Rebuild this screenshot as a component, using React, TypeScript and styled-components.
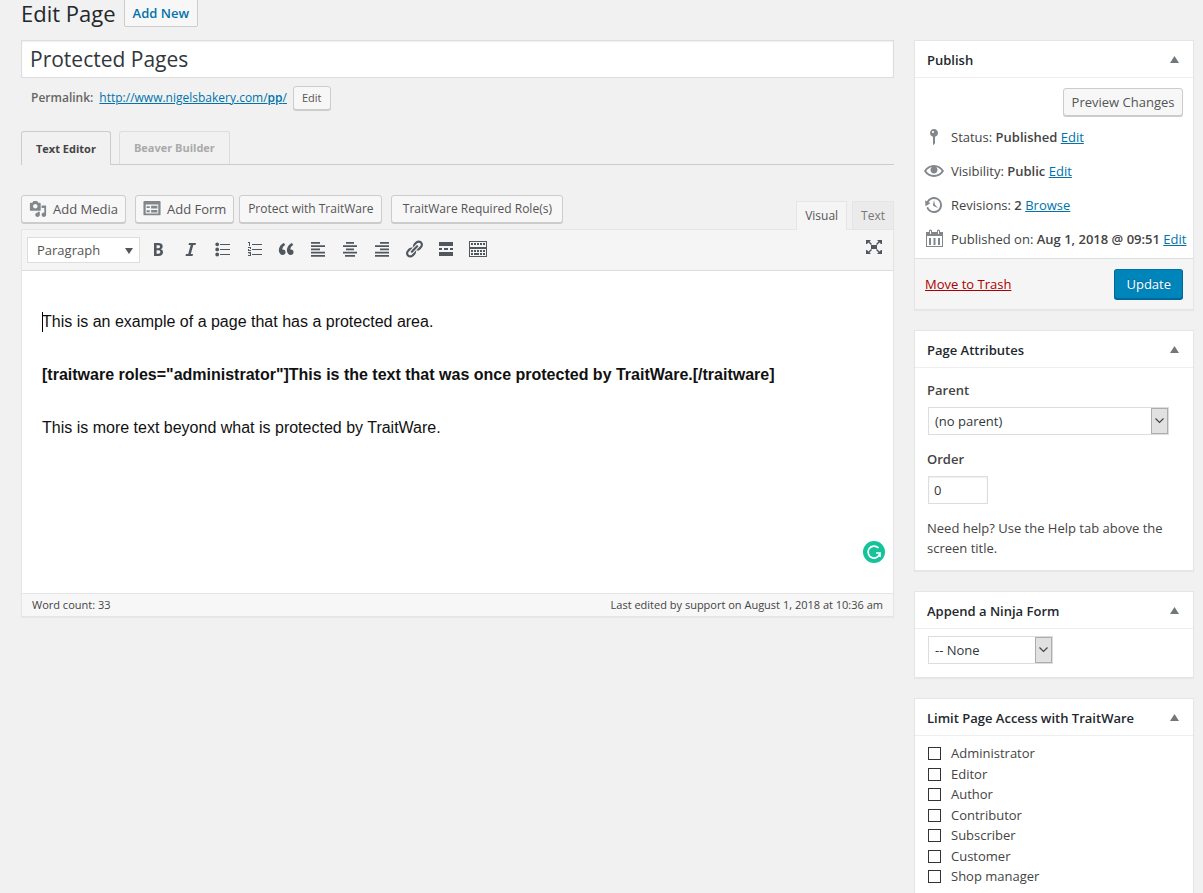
import React, { useState } from "react";
import styled, { createGlobalStyle, css } from "styled-components";

const GlobalStyle = createGlobalStyle`
  * { box-sizing: border-box; }
  body {
    margin: 0;
    background: #f1f1f1;
    color: #444;
    font: 13px/20px "Segoe UI", "Open Sans", "Noto Sans", sans-serif;
  }
  button, input, select, textarea { font: inherit; color: inherit; margin: 0; }
  h1, h2, p { margin: 0; }
`;

const Page = styled.div`
  display: flex;
  flex-direction: column;
  min-height: 100vh;
  padding: 0 9px 0 21px;
`;

const Header = styled.header`
  display: flex;
  align-items: flex-end;
  height: 27px;
  margin-bottom: 13px;
`;

const Heading = styled.h1`
  margin: 0 8px 1px 0;
  font-size: 22px;
  line-height: 26px;
  font-weight: 400;
  color: #23282d;
`;

const AddNew = styled.a`
  flex: none;
  padding: 4px 8px 3px;
  border: 1px solid #ccc;
  border-radius: 2px;
  background: #f7f7f7;
  color: #0073aa;
  font-weight: 600;
  text-decoration: none;
`;

const Columns = styled.div`
  flex: 1;
  display: grid;
  grid-template-columns: minmax(0, 1fr) 280px;
  gap: 20px;
`;

const Main = styled.main`
  min-width: 0;
`;

const Sidebar = styled.aside`
  display: flex;
  flex-direction: column;
  gap: 20px;
`;

const TitleInput = styled.input`
  display: block;
  width: 100%;
  height: 38px;
  padding: 0 8px;
  border: 1px solid #ddd;
  background: #fff;
  color: #32373c;
  font-size: 21px;
  box-shadow: inset 0 1px 2px rgba(0, 0, 0, 0.07);
  outline: none;
`;

const Permalink = styled.div`
  display: flex;
  align-items: center;
  gap: 6px;
  padding: 8px 10px 0;
  color: #666;
  font-size: 12px;

  strong { font-weight: 600; }
`;

const Link = styled.a<{ $danger?: boolean }>`
  color: ${(p) => (p.$danger ? "#a00" : "#0073aa")};
`;

const Button = styled.button<{ $size?: "small" | "primary"; $width?: number; $compact?: boolean }>`
  display: inline-flex;
  align-items: center;
  justify-content: center;
  flex: none;
  height: 28px;
  min-width: ${(p) => p.$width ?? 0}px;
  padding: 0 7px;
  border: 1px solid #ccc;
  border-radius: 3px;
  background: #f7f7f7;
  box-shadow: 0 1px 0 #ccc;
  color: #555;
  font-size: ${(p) => (p.$compact ? 12 : 13)}px;
  white-space: nowrap;
  ${(p) => p.$size === "small" && css`
    height: 24px;
    padding: 0 8px;
    font-size: 11px;
  `}
  ${(p) => p.$size === "primary" && css`
    height: 30px;
    padding: 0 11px;
    border-color: #0073aa #006799 #006799;
    background: #0085ba;
    box-shadow: 0 1px 0 #006799;
    color: #fff;
    text-shadow: 0 -1px 1px #006799;
  `}
`;

const ModeTabs = styled.div`
  display: flex;
  gap: 8px;
  margin-top: 21px;
  border-bottom: 1px solid #ccc;
`;

const ModeTab = styled.button<{ $active?: boolean }>`
  height: ${(p) => (p.$active ? 34 : 33)}px;
  margin-bottom: ${(p) => (p.$active ? -1 : 0)}px;
  padding: 0 14px;
  border: 1px solid ${(p) => (p.$active ? "#ccc" : "#ddd")};
  border-bottom: 0;
  border-radius: 3px 3px 0 0;
  background: #f1f1f1;
  color: ${(p) => (p.$active ? "#444" : "#aaa")};
  font-size: 11px;
  font-weight: 700;
`;

const MediaRow = styled.div`
  display: flex;
  align-items: flex-start;
  margin-top: 30px;
  height: 34px;
`;

const MediaButtons = styled.div`
  display: flex;
  gap: 9px;
  flex: 1;
  min-width: 0;
`;

const ButtonPair = styled.div`
  display: flex;
  gap: 5px;
`;

const ViewTabs = styled.div`
  display: flex;
  gap: 5px;
  padding-top: 6px;
`;

const ViewTab = styled.button<{ $active?: boolean }>`
  position: relative;
  height: ${(p) => (p.$active ? 29 : 28)}px;
  padding: 0 8px;
  border: 1px solid #e5e5e5;
  border-bottom: 0;
  background: ${(p) => (p.$active ? "#f5f5f5" : "#ebebeb")};
  color: ${(p) => (p.$active ? "#555" : "#777")};
  font-size: 12px;
`;

const Editor = styled.section`
  border: 1px solid #e5e5e5;
  background: #fff;
  box-shadow: 0 1px 1px rgba(0, 0, 0, 0.04);
`;

const Toolbar = styled.div`
  display: flex;
  align-items: center;
  height: 41px;
  padding: 0 7px 0 5px;
  border-bottom: 1px solid #ddd;
  background: #f5f5f5;
  color: #50575e;
`;

const Tools = styled.div`
  display: flex;
  flex: 1;
  gap: 8px;
  padding-left: 6px;
`;

const ToolButton = styled.button<{ $raised?: boolean }>`
  display: flex;
  align-items: center;
  justify-content: center;
  width: 24px;
  height: 28px;
  padding: 0 0 ${(p) => (p.$raised ? 6 : 2)}px;
  border: 0;
  background: none;
`;

const SelectBox = styled.div<{ $width: number; $plain?: boolean }>`
  position: relative;
  width: ${(p) => p.$width}px;
  height: ${(p) => (p.$plain ? 26 : 28)}px;
  margin-left: ${(p) => (p.$plain ? 0 : 1)}px;

  select {
    appearance: none;
    width: 100%;
    height: 100%;
    padding: 0 ${(p) => (p.$plain ? 9 : 6)}px;
    border: 1px solid #ddd;
    border-radius: 0;
    background: #fff;
    color: ${(p) => (p.$plain ? "#555" : "#32373c")};
  }
`;

const PlainArrow = styled.svg`
  position: absolute;
  right: 7px;
  top: 11px;
  pointer-events: none;
`;

const DropArrow = styled.span`
  position: absolute;
  top: 1px;
  right: 1px;
  bottom: 1px;
  display: flex;
  align-items: center;
  justify-content: center;
  width: 17px;
  border: 1px solid #adadad;
  background: #e1e1e1;
  pointer-events: none;
`;

const Content = styled.div`
  position: relative;
  min-height: 322px;
  padding: 38px 20px 0;
  color: #111;
  font: 16px/26px "Liberation Sans", Arial, sans-serif;

  p + p { margin-top: 27px; }
`;

const Caret = styled.span`
  position: absolute;
  left: 20px;
  top: 41px;
  width: 1px;
  height: 20px;
  background: #000;
`;

const Badge = styled.svg`
  position: absolute;
  right: 8px;
  bottom: 30px;
`;

const StatusBar = styled.footer`
  display: flex;
  justify-content: space-between;
  padding: 1px 10px;
  border-top: 1px solid #e5e5e5;
  background: #f7f7f7;
  font-size: 11px;
`;

const Box = styled.section<{ $fill?: boolean }>`
  border: 1px solid #e5e5e5;
  background: #fff;
  box-shadow: 0 1px 1px rgba(0, 0, 0, 0.04);
  ${(p) => p.$fill && css`
    flex: 1;
    border-bottom: 0;
  `}
`;

const BoxHead = styled.div`
  display: flex;
  align-items: center;
  justify-content: space-between;
  height: 37px;
  padding: 0 12px;
  border-bottom: 1px solid #eee;

  h2 {
    padding-top: 1px;
    font-size: 13px;
    line-height: 20px;
    font-weight: 600;
    color: #23282d;
  }
  button {
    display: flex;
    padding: 0;
    border: 0;
    background: none;
  }
`;

const PreviewRow = styled.div`
  display: flex;
  justify-content: flex-end;
  padding: 10px 10px 4px;
`;

const Meta = styled.div`
  display: flex;
  align-items: center;
  gap: 7px;
  height: 34px;
  padding: 0 9px;
  white-space: nowrap;

  svg { color: #82878c; flex: none; }
  strong { font-weight: 600; }
`;

const Actions = styled.div`
  display: flex;
  align-items: center;
  justify-content: space-between;
  height: 51px;
  margin-top: 2px;
  padding: 0 10px;
  border-top: 1px solid #ddd;
  background: #f5f5f5;
`;

const Inside = styled.div<{ $tight?: boolean }>`
  padding: ${(p) => (p.$tight ? "7px 12px 13px" : "12px 12px 12px")};
`;

const Field = styled.div`
  display: flex;
  flex-direction: column;
  gap: 7px;
  margin-bottom: 14px;

  label { font-weight: 600; }
`;

const OrderInput = styled.input`
  width: 60px;
  height: 28px;
  && { margin-left: 1px; }
  padding: 0 5px;
  border: 1px solid #ddd;
  color: #32373c;
  box-shadow: inset 0 1px 2px rgba(0, 0, 0, 0.07);
`;

const Roles = styled.ul`
  display: grid;
  grid-auto-rows: 21px 20px;
  margin: 0;
  padding: 7px 13px 0;
  list-style: none;

  label {
    display: flex;
    align-items: center;
    gap: 10px;
  }
  input {
    appearance: none;
    width: 13px;
    height: 13px;
    border: 1px solid #333;
    background: #fff;
  }
`;

const ICONS: Record<string, string> = {
  media: "M13 11V4c0-.55-.45-1-1-1h-1.67L9 1H5L3.67 3H2c-.55 0-1 .45-1 1v7c0 .55.45 1 1 1h10c.55 0 1-.45 1-1zM7 4.5c1.38 0 2.5 1.12 2.5 2.5S8.38 9.5 7 9.5 4.5 8.38 4.5 7 5.62 4.5 7 4.5zM14 6h5v10.5c0 1.38-1.12 2.5-2.5 2.5S14 17.88 14 16.5s1.12-2.5 2.5-2.5c.17 0 .34.02.5.05V9h-3V6zm-4 8.05V13h2v3.5c0 1.38-1.12 2.5-2.5 2.5S7 17.88 7 16.5 8.12 14 9.5 14c.17 0 .34.02.5.05z",
  form: "M1.500 1h17a1 1 0 0 1 1 1v14a1 1 0 0 1-1 1h-17a1 1 0 0 1-1-1V2a1 1 0 0 1 1-1zM3 5v10h14V5zM4 7h3.500v2H4zM9 6.500h7v3H9zM4 11.500h3.500v2H4zM9 11h7v3H9z",
  bold: "M6 4v13h4.54c1.37 0 2.46-.33 3.26-1 .8-.66 1.2-1.58 1.2-2.77 0-.84-.17-1.51-.51-2.01s-.9-.85-1.67-1.03v-.09c.57-.1 1.02-.4 1.36-.9s.51-1.13.51-1.91c0-1.14-.39-1.98-1.17-2.5C12.75 4.26 11.5 4 9.78 4H6zm2.57 5.15V6.26h1.36c.73 0 1.27.11 1.61.32.34.22.51.58.51 1.07 0 .54-.16.92-.47 1.15s-.82.35-1.51.35h-1.5zm0 2.19h1.6c1.44 0 2.16.53 2.16 1.61 0 .6-.17 1.05-.51 1.34s-.86.43-1.57.43H8.57v-3.38z",
  italic: "M15.400 4h-5.200l-.6 2.200h1.400L8.600 14.800H7.100L6.500 17h-2l0 0h5.700l.6-2.200H9.300l0 0h1.900L13.600 6.200h1.200z",
  bullets: "M5.2 7.200a1.900 1.900 0 1 1 0-3.800 1.900 1.900 0 0 1 0 3.800zM8 5h10v1H8zM5.200 12.300a1.900 1.900 0 1 1 0-3.800 1.900 1.900 0 0 1 0 3.800zM8 10h10v1H8zM5.200 17.400a1.900 1.900 0 1 1 0-3.800 1.900 1.900 0 0 1 0 3.800zM8 15h10v1H8z",
  numbers: "M4 3h2v4H5V4H4zM8 5h10v1H8zM4 8h3v2H5v1h2v1H4v-2h2V9H4zM8 10h10v1H8zM4 13h3v4H4v-1h2v-1H4.500v-.5H6V14H4zM8 15h10v1H8z",
  quote: "M9.49 13.22c0-.74-.2-1.38-.61-1.9-.62-.78-1.83-.88-2.53-.72-.29-1.65 1.11-3.75 2.92-4.65L7.88 4c-2.73 1.3-5.42 4.28-4.96 8.05C3.21 14.43 4.59 16 6.54 16c.85 0 1.56-.25 2.12-.75s.83-1.18.83-2.03zm8.05 0c0-.74-.2-1.38-.61-1.9-.63-.78-1.83-.88-2.53-.72-.29-1.65 1.11-3.75 2.92-4.65L15.93 4c-2.73 1.3-5.41 4.28-4.95 8.05.29 2.38 1.66 3.95 3.61 3.95.85 0 1.56-.25 2.12-.75s.83-1.18.83-2.03z",
  left: "M3 3h9v1.700H3zM3 6.200h14v1.700H3zM3 9.500h9v1.700H3zM3 12.700h14v1.700H3zM3 16h14v1.700H3z",
  center: "M6 3h8v1.700H6zM3 6.200h14v1.700H3zM6 9.500h8v1.700H6zM3 12.700h14v1.700H3zM5 16h10v1.700H5z",
  right: "M8 3h9v1.700H8zM3 6.200h14v1.700H3zM8 9.500h9v1.700H8zM3 12.700h14v1.700H3zM3 16h14v1.700H3z",
  link: "M17.74 2.76c1.68 1.69 1.68 4.41 0 6.1l-1.53 1.52c-1.12 1.12-2.7 1.47-4.14 1.09l2.62-2.61.76-.77.76-.76c.84-.84.84-2.2 0-3.04-.84-.85-2.2-.85-3.04 0l-.77.76-3.38 3.38c-.37-1.44-.02-3.02 1.1-4.14l1.52-1.53c1.69-1.68 4.42-1.68 6.1 0zM8.59 13.43l5.34-5.34c.42-.42.42-1.1 0-1.52-.44-.43-1.13-.39-1.53 0l-5.33 5.34c-.42.42-.42 1.1 0 1.52.44.43 1.13.39 1.52 0zm-.76 2.29l4.14-4.15c.38 1.44.03 3.02-1.09 4.14l-1.52 1.53c-1.69 1.68-4.41 1.68-6.1 0-1.68-1.68-1.68-4.42 0-6.1l1.53-1.52c1.12-1.12 2.7-1.47 4.14-1.1l-4.14 4.15c-.85.84-.85 2.2 0 3.05.84.84 2.2.84 3.04 0z",
  more: "M3 3h14v4H3zM3 9h3v2H3zM8 9h4v2H8zM14 9h3v2h-3zM3 13h14v4H3z",
  keyboard: "M1 2h18v7H1zM2 3v5h16V3zM3 4h2v2H3zM6 4h2v2H6zM9 4h2v2H9zM12 4h2v2h-2zM15 4h2v2h-2zM1 9h18v9H1zM2 10v7h16v-7zM3 11h2v2H3zM6 11h2v2H6zM9 11h2v2H9zM12 11h2v2h-2zM15 11h2v2h-2zM3 14h2v2H3zM6 14h5v2H6zM12 14h2v2h-2zM15 14h2v2h-2z",
  expand: "M7 8h6v4H7zM2 3h5L5.500 4.500 8 7 7 8 4.500 5.500 3 7H2zM18 3v4h-1l-1.500-1.500L13 8l-1-1 2.500-2.500L13 3zM2 17v-4h1l1.500 1.500L7 12l1 1-2.500 2.500L7 17zM18 17h-5l1.500-1.500L12 13l1-1 2.500 2.500L17 13h1z",
  pin: "M14 6c0 1.860-1.280 3.410-3 3.860V16c0 1-2 2-2 2V9.860c-1.720-.45-3-2-3-3.860 0-2.210 1.790-4 4-4s4 1.790 4 4zM8 5c0 .55.45 1 1 1s1-.45 1-1-.45-1-1-1-1 .45-1 1z",
  eye: "M19.7 9.4C17.7 6 14 3.9 10 3.9S2.3 6 .3 9.4L0 10l.3.6c2 3.4 5.7 5.5 9.7 5.5s7.7-2.1 9.7-5.5l.3-.6-.3-.6zM10 14.1c-3.1 0-6-1.6-7.7-4.1C3.6 8 5.7 6.6 8 6.1c-.9.6-1.5 1.7-1.5 2.9 0 1.9 1.6 3.5 3.5 3.5s3.500-1.6 3.500-3.500c0-1.200-.6-2.300-1.500-2.900 2.300.5 4.400 1.900 5.700 3.900-1.700 2.500-4.600 4.100-7.700 4.100z",
  history: "M13.65 2.88c3.93 2.01 5.48 6.84 3.47 10.77s-6.83 5.48-10.77 3.47c-1.87-.96-3.2-2.56-3.86-4.4l1.64-1.03c.45 1.57 1.52 2.95 3.08 3.76 3.01 1.54 6.69.35 8.23-2.66 1.55-3.01.36-6.69-2.65-8.24C9.78 3.01 6.1 4.2 4.56 7.21l1.88.97-4.95 3.08-.39-5.82 1.78.91C4.9 2.4 9.75.89 13.65 2.88zm-4.36 7.83C9.11 10.53 9 10.28 9 10c0-.07.03-.12.04-.19h-.01L10 5l.97 4.81L14 13l-4.5-2.12.02-.02c-.08-.04-.16-.09-.23-.15z",
  calendar: "M16 3h3v15H2V3h3V2a1.500 1.500 0 0 1 3 0v1h5V2a1.500 1.500 0 0 1 3 0zM6 2v3h1V2zM14 2v3h1V2zM3 7v10h15V7zM5 9h2v7H5zM9.500 9h2v7h-2zM14 9h2v7h-2z",
};

const Icon = ({ name, size = 20 }: { name: string; size?: number }) => (
  <svg width={size} height={size} viewBox="0 0 20 20" fill="currentColor" fillRule="evenodd" aria-hidden="true">
    {name === "italic" ? (
      <path d="M9 4h7l-.5 2h-2.200l-2.500 9h2.200l-.5 2h-7l.5-2h2.200l2.500-9H8.500z" />
    ) : (
      <path d={ICONS[name]} />
    )}
  </svg>
);

const MediaIcon = styled.span`
  display: flex;
  margin-right: 6px;
  color: #82878c;
`;

const TOOLS: [string, string][] = [
  ["bold", "Bold"],
  ["italic", "Italic"],
  ["bullets", "Bulleted list"],
  ["numbers", "Numbered list"],
  ["quote", "Blockquote"],
  ["left", "Align left"],
  ["center", "Align center"],
  ["right", "Align right"],
  ["link", "Insert link"],
  ["more", "Read more"],
  ["keyboard", "Toolbar toggle"],
];

const ROLES = ["Administrator", "Editor", "Author", "Contributor", "Subscriber", "Customer", "Shop manager"];

const Drop = () => (
  <DropArrow>
    <svg width="9" height="6" viewBox="0 0 9 6" fill="none" stroke="#444" strokeWidth="1.2">
      <path d="M.5.5l4 4 4-4" />
    </svg>
  </DropArrow>
);

const Panel = ({ title, fill, children }: { title: string; fill?: boolean; children: React.ReactNode }) => (
  <Box $fill={fill}>
    <BoxHead>
      <h2>{title}</h2>
      <button type="button" aria-label={`Toggle ${title}`}>
        <svg width="11" height="7" viewBox="0 0 11 7" fill="#72777c">
          <path d="M0 7l4.500-7L9 7z" />
        </svg>
      </button>
    </BoxHead>
    {children}
  </Box>
);

export default function App() {
  const [title, setTitle] = useState("Protected Pages");
  const [order, setOrder] = useState("0");

  return (
    <>
      <GlobalStyle />
      <Page>
        <Header>
          <Heading>Edit Page</Heading>
          <AddNew href="#new">Add New</AddNew>
        </Header>
        <Columns>
          <Main>
            <TitleInput aria-label="Title" value={title} onChange={(e) => setTitle(e.target.value)} />
            <Permalink>
              <strong>Permalink:</strong>
              <Link href="#permalink">http://www.nigelsbakery.com/<strong>pp</strong>/</Link>
              <Button $size="small">Edit</Button>
            </Permalink>
            <ModeTabs>
              <ModeTab $active>Text Editor</ModeTab>
              <ModeTab>Beaver Builder</ModeTab>
            </ModeTabs>
            <MediaRow>
              <MediaButtons>
                <Button><MediaIcon><Icon name="media" size={18} /></MediaIcon>Add Media</Button>
                <ButtonPair>
                  <Button><MediaIcon><Icon name="form" size={18} /></MediaIcon>Add Form</Button>
                  <Button $compact $width={143}>Protect with TraitWare</Button>
                </ButtonPair>
                <Button $compact $width={172}>TraitWare Required Role(s)</Button>
              </MediaButtons>
              <ViewTabs>
                <ViewTab $active>Visual</ViewTab>
                <ViewTab>Text</ViewTab>
              </ViewTabs>
            </MediaRow>
            <Editor>
              <Toolbar>
                <SelectBox $width={113} $plain>
                  <select aria-label="Text style"><option>Paragraph</option></select>
                  <PlainArrow width="8" height="6" viewBox="0 0 8 6" fill="#50575e"><path d="M0 0h8L4 6z" /></PlainArrow>
                </SelectBox>
                <Tools>
                  {TOOLS.map(([name, label]) => (
                    <ToolButton key={name} type="button" aria-label={label}><Icon name={name} /></ToolButton>
                  ))}
                </Tools>
                <ToolButton $raised type="button" aria-label="Distraction-free mode"><Icon name="expand" /></ToolButton>
              </Toolbar>
              <Content>
                <Caret />
                <p>This is an example of a page that has a protected area.</p>
                <p><strong>[traitware roles="administrator"]This is the text that was once protected by TraitWare.[/traitware]</strong></p>
                <p>This is more text beyond what is protected by TraitWare.</p>
                <Badge width="22" height="22" viewBox="0 0 22 22" fill="none">
                  <circle cx="11" cy="11" r="11" fill="#15c39a" />
                  <path d="M15.500 7A6 6 0 1 0 17 12h-4M17 12v4" stroke="#fff" strokeWidth="1.700" />
                </Badge>
              </Content>
              <StatusBar>
                <span>Word count: 33</span>
                <span>Last edited by support on August 1, 2018 at 10:36 am</span>
              </StatusBar>
            </Editor>
          </Main>
          <Sidebar>
            <Panel title="Publish">
              <PreviewRow><Button $width={120}>Preview Changes</Button></PreviewRow>
              <Meta><Icon name="pin" /><span>Status: <strong>Published</strong> <Link href="#status">Edit</Link></span></Meta>
              <Meta><Icon name="eye" /><span>Visibility: <strong>Public</strong> <Link href="#visibility">Edit</Link></span></Meta>
              <Meta><Icon name="history" /><span>Revisions: <strong>2</strong> <Link href="#revisions">Browse</Link></span></Meta>
              <Meta><Icon name="calendar" /><span>Published on: <strong>Aug 1, 2018 @ 09:51</strong> <Link href="#date">Edit</Link></span></Meta>
              <Actions>
                <Link $danger href="#trash">Move to Trash</Link>
                <Button $size="primary">Update</Button>
              </Actions>
            </Panel>
            <Panel title="Page Attributes">
              <Inside>
                <Field>
                  <label htmlFor="parent">Parent</label>
                  <SelectBox $width={241}>
                    <select id="parent"><option>(no parent)</option></select>
                    <Drop />
                  </SelectBox>
                </Field>
                <Field>
                  <label htmlFor="order">Order</label>
                  <OrderInput id="order" value={order} onChange={(e) => setOrder(e.target.value)} />
                </Field>
                <p>Need help? Use the Help tab above the screen title.</p>
              </Inside>
            </Panel>
            <Panel title="Append a Ninja Form">
              <Inside $tight>
                <SelectBox $width={125}>
                  <select aria-label="Ninja form"><option>-- None</option></select>
                  <Drop />
                </SelectBox>
              </Inside>
            </Panel>
            <Panel title="Limit Page Access with TraitWare" fill>
              <Roles>
                {ROLES.map((role) => (
                  <li key={role}><label><input type="checkbox" />{role}</label></li>
                ))}
              </Roles>
            </Panel>
          </Sidebar>
        </Columns>
      </Page>
    </>
  );
}
